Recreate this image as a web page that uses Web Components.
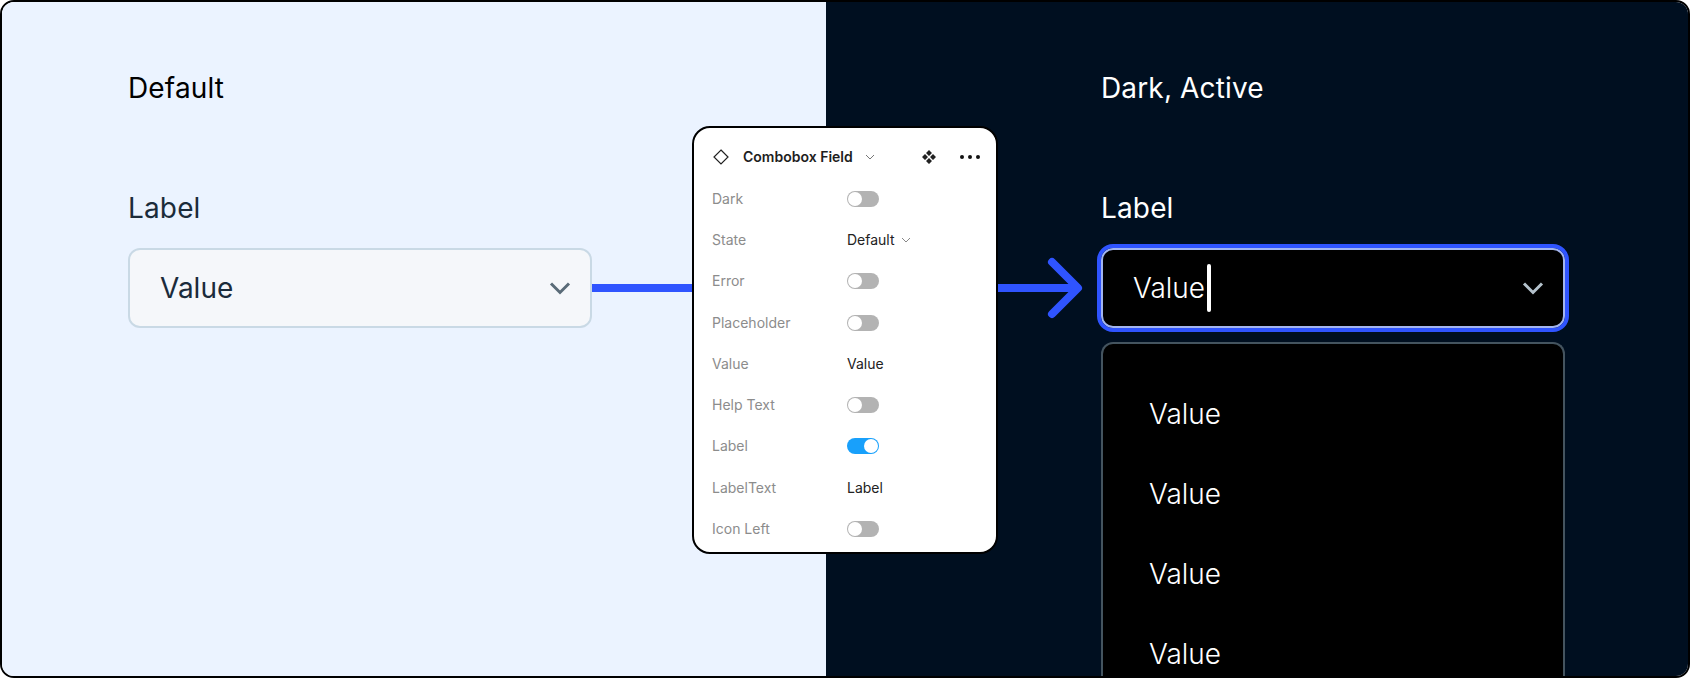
<!DOCTYPE html>
<html lang="en">
<head>
<meta charset="UTF-8">
<title>Combobox Field</title>
<style>
    html, body { margin: 0; background: #fff; }
    body { font-family: Inter, "Liberation Sans", sans-serif; }
</style>
</head>
<body>
<template id="stage-tmpl">
    <style>
        :host {
            display: grid;
            grid-template-columns: 824px 1fr;
            position: relative;
            box-sizing: border-box;
            width: 1690px;
            height: 678px;
            border: 2px solid #000;
            border-radius: 14px;
            overflow: hidden;
        }
    </style>
    <slot></slot>
</template>

<template id="panel-tmpl">
    <style>
        :host {
            display: block;
            box-sizing: border-box;
            padding: 66px 0 0 var(--panel-left, 126px);
            height: 674px;
            overflow: hidden;
            background: var(--panel-bg, #ebf3ff);
            color: var(--panel-title, #000);
        }
        h2 { margin: 0 0 80px; font: 400 28px/40px Inter, sans-serif; letter-spacing: .15px; }
    </style>
    <h2><slot name="title"></slot></h2>
    <slot></slot>
</template>

<template id="field-tmpl">
    <style>
        :host { display: block; width: 464px; }
        .label { font: 400 28px/40px Inter, sans-serif; letter-spacing: .15px; color: var(--label, #1b2b3a); margin-bottom: 20px; }
        .box {
            display: flex;
            align-items: center;
            box-sizing: border-box;
            height: 80px;
            padding: 0 19px 0 30px;
            border: 2px solid var(--line, #c9d9e5);
            border-radius: 12px;
            background: var(--fill, #f5f7fa);
            font: var(--value-weight, 400) 28px/40px Inter, sans-serif;
            color: var(--label, #1b2b3a);
        }
        :host([active]) .box { outline: 4px solid #2f54ff; }
        .val { flex: 1; display: flex; align-items: center; }
        .caret { width: 3.5px; height: 48px; margin-left: 2px; border-radius: 2px; background: #fff; display: none; }
        :host([active]) .caret { display: block; }
        svg { width: 22px; height: 14px; fill: none; stroke: var(--chev, #5a6b78); stroke-width: 3; }
    </style>
    <div class="label"><slot name="label"></slot></div>
    <div class="box">
        <div class="val"><slot></slot><span class="caret"></span></div>
        <svg viewBox="0 0 22 14"><path d="M2 2.5l9 9 9-9"/></svg>
    </div>
</template>

<template id="menu-tmpl">
    <style>
        :host {
            display: block;
            box-sizing: border-box;
            width: 464px;
            margin-top: 14px;
            padding: 50px 0 0 46px;
            border: 2px solid #44545f;
            border-bottom: 0;
            border-radius: 12px 12px 0 0;
            background: #000;
            color: #fff;
        }
        ::slotted(div) { font: 350 28px/40px Inter, sans-serif; height: 80px; }
    </style>
    <slot></slot>
</template>

<template id="card-tmpl">
    <style>
        :host {
            position: absolute;
            left: 690px;
            top: 124px;
            box-sizing: border-box;
            width: 306px;
            height: 428px;
            padding: 9px 16px 0 18px;
            border: 2px solid #000;
            border-radius: 18px;
            background: #fff;
            font-family: Inter, sans-serif;
        }
        header { display: flex; align-items: center; height: 41.25px; margin: -1px 0 1px -1px; color: #1e1e1e; }
        .name { margin-left: 12px; font: 600 14px/16px Inter, sans-serif; }
        .chev { margin-left: 12px; }
        .comp { margin-left: auto; }
        .dots { margin-left: 24px; }
    </style>
    <header>
        <svg width="20" height="20" viewBox="0 0 20 20"><path d="M10 3l7 7-7 7-7-7z" fill="none" stroke="#222" stroke-width="1.2"/></svg>
        <span class="name"><slot name="title"></slot></span>
        <svg class="chev" width="10" height="6" viewBox="0 0 10 6"><path d="M1 1l4 4 4-4" fill="none" stroke="#777" stroke-width="1"/></svg>
        <svg class="comp" width="14" height="14" viewBox="0 0 14 14" fill="#222"><path d="M7 0l3 3-3 3-3-3zM7 8l3 3-3 3-3-3zM3 4l3 3-3 3-3-3zM11 4l3 3-3 3-3-3z"/></svg>
        <svg class="dots" width="20" height="4" viewBox="0 0 20 4" fill="#111"><circle cx="2" cy="2" r="2"/><circle cx="10" cy="2" r="2"/><circle cx="18" cy="2" r="2"/></svg>
    </header>
    <slot></slot>
</template>

<template id="row-tmpl">
    <style>
        :host {
            display: grid;
            grid-template-columns: 135px 1fr;
            align-items: center;
            height: 41.25px;
            font: 400 14px/16px Inter, sans-serif;
        }
        .k { color: #8c8c8c; }
        .v { display: flex; align-items: center; gap: 6px; color: #222; }
    </style>
    <div class="k"><slot name="key"></slot></div>
    <div class="v"><slot></slot></div>
</template>

<template id="toggle-tmpl">
    <style>
        :host {
            display: block;
            position: relative;
            box-sizing: border-box;
            width: 32px;
            height: 16px;
            border-radius: 8px;
            background: #b3b3b3;
        }
        :host::after {
            content: "";
            position: absolute;
            left: 1px;
            top: 1px;
            width: 14px;
            height: 14px;
            border-radius: 50%;
            background: #fff;
        }
        :host([on]) { background: #18a0fb; }
        :host([on])::after { left: 17px; }
    </style>
</template>

<template id="wire-tmpl">
    <style>
        :host { position: absolute; display: block; height: 8px; background: #2f54ff; }
    </style>
</template>

<demo-stage>
    <demo-panel>
        <span slot="title">Default</span>
        <combo-field><span slot="label">Label</span>Value</combo-field>
    </demo-panel>
    <demo-panel style="--panel-bg:#000f20;--panel-title:#fff;--panel-left:275px">
        <span slot="title">Dark, Active</span>
        <combo-field active style="--label:#fff;--line:#a3b5ee;--fill:#000;--chev:#b4c2cc;--value-weight:350"><span slot="label">Label</span>Value</combo-field>
        <combo-menu>
            <div>Value</div>
            <div>Value</div>
            <div>Value</div>
            <div>Value</div>
        </combo-menu>
    </demo-panel>

    <wire-line style="left:590px;top:282px;width:100px"></wire-line>
    <wire-line style="left:995px;top:282px;width:79px"></wire-line>
    <svg style="position:absolute;left:1040px;top:248px" width="50" height="76" viewBox="0 0 50 76"><path d="M10 12l26 26-26 26" fill="none" stroke="#2f54ff" stroke-width="8" stroke-linecap="round" stroke-linejoin="round"/></svg>

    <props-card>
        <span slot="title">Combobox Field</span>
        <prop-row><span slot="key">Dark</span><toggle-switch></toggle-switch></prop-row>
        <prop-row><span slot="key">State</span>Default <svg width="10" height="6" viewBox="0 0 10 6"><path d="M1 1l4 4 4-4" fill="none" stroke="#888" stroke-width="1"/></svg></prop-row>
        <prop-row><span slot="key">Error</span><toggle-switch></toggle-switch></prop-row>
        <prop-row><span slot="key">Placeholder</span><toggle-switch></toggle-switch></prop-row>
        <prop-row><span slot="key">Value</span>Value</prop-row>
        <prop-row><span slot="key">Help Text</span><toggle-switch></toggle-switch></prop-row>
        <prop-row><span slot="key">Label</span><toggle-switch on></toggle-switch></prop-row>
        <prop-row><span slot="key">LabelText</span>Label</prop-row>
        <prop-row><span slot="key">Icon Left</span><toggle-switch></toggle-switch></prop-row>
    </props-card>
</demo-stage>

<script>
    // every element is just a template stamped into an open shadow root
    const parts = {
        'demo-stage': 'stage-tmpl',
        'demo-panel': 'panel-tmpl',
        'combo-field': 'field-tmpl',
        'combo-menu': 'menu-tmpl',
        'props-card': 'card-tmpl',
        'prop-row': 'row-tmpl',
        'toggle-switch': 'toggle-tmpl',
        'wire-line': 'wire-tmpl'
    }
    for (const [tag, id] of Object.entries(parts)) {
        customElements.define(tag, class extends HTMLElement {
            connectedCallback() {
                if (this.shadowRoot) return
                this.attachShadow({mode: 'open'}).append(document.getElementById(id).content.cloneNode(true))
            }
        })
    }
</script>
</body>
</html>
